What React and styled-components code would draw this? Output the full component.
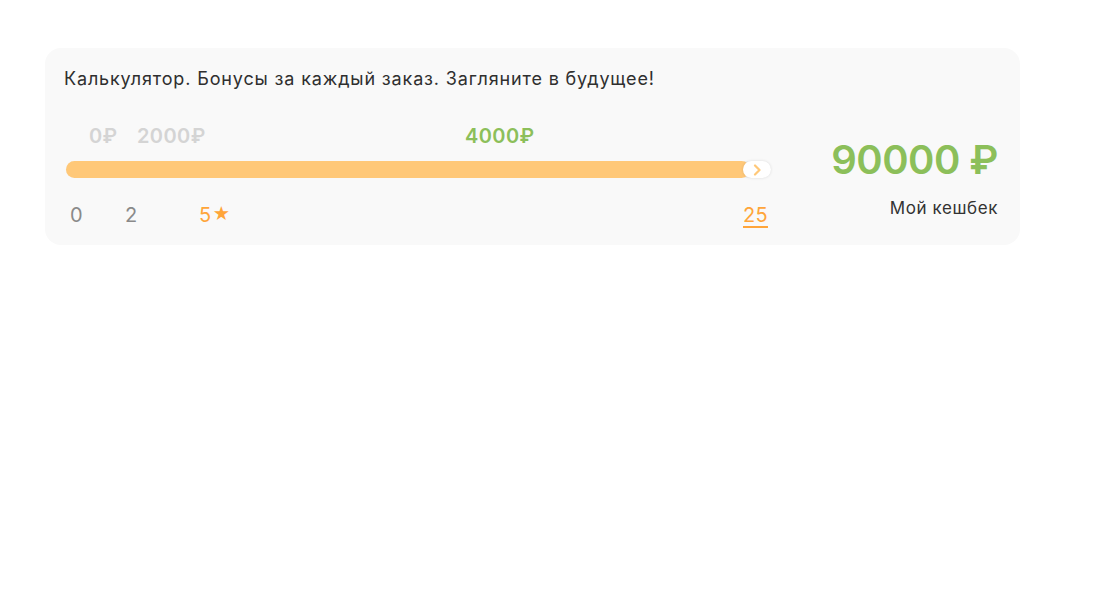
import React from "react";
import styled, {createGlobalStyle} from "styled-components";

const GlobalStyle = createGlobalStyle`
  body {
    margin: 0;
    background: #ffffff;
    font-family: Inter, "Noto Sans", sans-serif;
  }
`;

const Page = styled.div`
  padding: 48px 91px 0 45px;
`;

const Card = styled.div`
  width: 975px;
  box-sizing: border-box;
  height: 197px;
  background: #f9f9f9;
  border-radius: 16px;
  padding: 18px 22px 0 19px;
`;

const Title = styled.div`
  font-size: 18px;
  letter-spacing: 0.85px;
  color: #2f2f2f;
  line-height: 26px;
`;

const Body = styled.div`
  display: flex;
  justify-content: space-between;
  margin-top: 32px;
`;

const Scale = styled.div`
  width: 712px;
  display: flex;
  flex-direction: column;
`;

const Row = styled.div`
  position: relative;
  height: ${p => p.$h}px;
`;

const Mark = styled.span`
  position: absolute;
  top: 0;
  white-space: nowrap;
  font-size: ${p => p.$size}px;
  font-weight: ${p => (p.$bold ? 600 : 400)};
  letter-spacing: ${p => (p.$bold ? 0.4 : 0.3)}px;
  color: ${p => p.$color};
  text-decoration: ${p => (p.$underline ? "underline" : "none")};
  text-underline-offset: 4px;
  text-decoration-thickness: 2px;
`;

const Track = styled.div`
  position: relative;
  margin: 13px 0 0 2px;
  width: 705px;
  height: 17px;
  border-radius: 9px;
  background: #f1f1f1;
`;

const Fill = styled.div`
  height: 100%;
  border-radius: 9px;
  background: #ffc878;
`;

const Knob = styled.div`
  position: absolute;
  top: 0;
  right: 0;
  width: 28px;
  height: 17px;
  border-radius: 9px;
  background: #ffffff;
  box-shadow: 0 0 3px rgba(0, 0, 0, 0.12);
  display: flex;
  align-items: center;
  justify-content: center;
`;

const Star = styled.span`
  font-size: 17px;
  margin-left: 1px;
  position: relative;
  top: -2px;
`;

const Total = styled.div`
  display: flex;
  flex-direction: column;
  align-items: flex-end;
  padding-top: 12px;
`;

const Amount = styled.div`
  font-size: 40px;
  font-weight: 600;
  letter-spacing: -0.5px;
  color: #8cbf5a;
  line-height: 48px;
`;

const Caption = styled.div`
  margin-top: 14px;
  font-size: 17px;
  letter-spacing: 0.6px;
  color: #333;
`;

const prices = [
  {label: "0₽", x: 25, color: "#d4d4d4"},
  {label: "2000₽", x: 73, color: "#d4d4d4"},
  {label: "4000₽", x: 401, color: "#8cbf5a"},
];

const orders = [
  {label: "0", x: 6, color: "#8a8a8a"},
  {label: "2", x: 61, color: "#8a8a8a"},
  {label: "5", x: 135, color: "#ffa53a", star: true},
  {label: "25", x: 679, color: "#ffa53a", underline: true},
];

const Chevron = () => (
  <svg width="10" height="12" viewBox="0 0 10 12">
    <path d="M3 1.5 L7.5 6 L3 10.5" fill="none" stroke="#ffc878" strokeWidth="2.2" strokeLinecap="round" strokeLinejoin="round"/>
  </svg>
);

export default function App() {
  return (
    <>
      <GlobalStyle/>
      <Page>
        <Card>
          <Title>Калькулятор. Бонусы за каждый заказ. Загляните в будущее!</Title>
          <Body>
            <Scale>
              <Row $h={24}>
                {prices.map(p => (
                  <Mark key={p.label} $size={20} $bold $color={p.color} style={{left: p.x}}>{p.label}</Mark>
                ))}
              </Row>
              <Track>
                <Fill style={{width: "97%"}}/>
                <Knob><Chevron/></Knob>
              </Track>
              <Row $h={30} style={{marginTop: 25}}>
                {orders.map(o => (
                  <Mark key={o.label} $size={20} $color={o.color} $underline={o.underline} style={{left: o.x}}>
                    {o.label}{o.star && <Star>★</Star>}
                  </Mark>
                ))}
              </Row>
            </Scale>
            <Total>
              <Amount>90000 ₽</Amount>
              <Caption>Мой кешбек</Caption>
            </Total>
          </Body>
        </Card>
      </Page>
    </>
  );
}
